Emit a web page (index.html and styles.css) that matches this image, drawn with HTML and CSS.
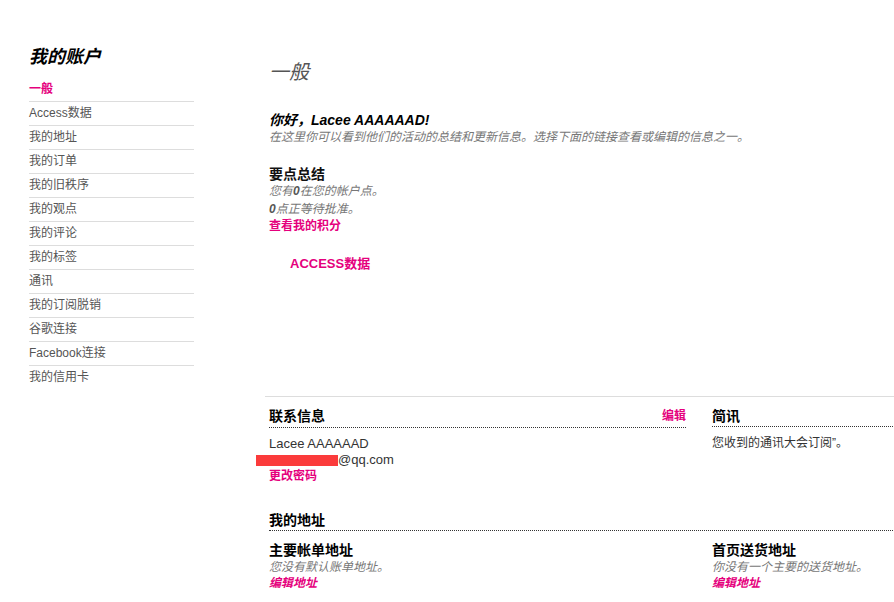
FILE: index.html
```html
<!DOCTYPE html>
<html lang="zh">
<head>
<meta charset="utf-8">
<title>我的账户</title>
<link rel="stylesheet" href="styles.css">
</head>
<body>
<div class="page">
  <aside class="sidebar">
    <h2 class="side-title">我的账户</h2>
    <ul class="side-nav">
      <li class="active">一般</li>
      <li>Access数据</li>
      <li>我的地址</li>
      <li>我的订单</li>
      <li>我的旧秩序</li>
      <li>我的观点</li>
      <li>我的评论</li>
      <li>我的标签</li>
      <li>通讯</li>
      <li>我的订阅脱销</li>
      <li>谷歌连接</li>
      <li>Facebook连接</li>
      <li>我的信用卡</li>
    </ul>
  </aside>
  <main class="main">
    <h1 class="page-title">一般</h1>
    <p class="greeting">你好，Lacee AAAAAAD!</p>
    <p class="intro">在这里你可以看到他们的活动的总结和更新信息。选择下面的链接查看或编辑的信息之一。</p>

    <section class="summary">
      <h3 class="summary-title">要点总结</h3>
      <p class="note">您有<b>0</b>在您的帐户点。</p>
      <p class="note"><b>0</b>点正等待批准。</p>
      <a class="link">查看我的积分</a>
    </section>

    <div class="access">ACCESS数据</div>

    <div class="divider"></div>

    <div class="cols contact">
      <section class="col">
        <div class="box-head"><span>联系信息</span><a class="edit">编辑</a></div>
        <p class="plain">Lacee AAAAAAD</p>
        <p class="plain"><span class="redact"></span>@qq.com</p>
        <a class="link small">更改密码</a>
      </section>
      <section class="col">
        <div class="box-head"><span>简讯</span></div>
        <p class="plain news">您收到的通讯大会订阅”。</p>
      </section>
    </div>

    <div class="box-head full"><span>我的地址</span></div>
    <div class="cols addr">
      <section class="col">
        <h4 class="addr-title">主要帐单地址</h4>
        <p class="note">您没有默认账单地址。</p>
        <a class="link italic">编辑地址</a>
      </section>
      <section class="col">
        <h4 class="addr-title">首页送货地址</h4>
        <p class="note">你没有一个主要的送货地址。</p>
        <a class="link italic">编辑地址</a>
      </section>
    </div>
  </main>
</div>
</body>
</html>
```

FILE: styles.css
```css
html, body {
  margin: 0;
  padding: 0;
  background: #fff;
  overflow: hidden;
}
body {
  font-family: "Liberation Sans", "Noto Sans CJK SC", sans-serif;
  color: #333;
  width: 894px;
  height: 602px;
}
p, h1, h2, h3, h4, ul { margin: 0; padding: 0; }
.page {
  display: flex;
  align-items: flex-start;
  width: 1200px;
}
.sidebar {
  margin-left: 29px;
  width: 165px;
  padding-top: 45px;
  flex: none;
}
.side-title {
  font-size: 18px;
  line-height: 24px;
  font-weight: bold;
  font-style: italic;
  color: #000;
  margin-bottom: 9px;
}
.side-nav {
  list-style: none;
}
.side-nav li {
  font-size: 12px;
  line-height: 23px;
  color: #555;
  border-bottom: 1px solid #ddd;
}
.side-nav li:last-child { border-bottom: none; }
.side-nav li.active {
  color: #e5007d;
  font-weight: bold;
}
.main {
  margin-left: 75px;
  width: 860px;
  padding-top: 60px;
  flex: none;
}
.page-title {
  font-size: 20px;
  line-height: 24px;
  font-weight: normal;
  font-style: italic;
  color: #555;
}
.greeting {
  margin-top: 27px;
  font-size: 14px;
  line-height: 18px;
  font-weight: bold;
  font-style: italic;
  color: #000;
}
.intro {
  font-size: 12px;
  line-height: 16px;
  font-style: italic;
  color: #777;
}
.summary { margin-top: 20px; display: flex; flex-direction: column; align-items: flex-start; }
.summary-title {
  font-size: 14px;
  line-height: 18px;
  font-weight: bold;
  color: #111;
}
.note {
  font-size: 12px;
  line-height: 17.5px;
  font-style: italic;
  color: #777;
}
.note b { color: #555; }
.link {
  font-size: 12px;
  line-height: 17.5px;
  font-weight: bold;
  color: #e5007d;
}
.link.small { line-height: 16px; }
.link.italic { font-style: italic; line-height: 16px; }
.access {
  margin-top: 19px;
  padding-left: 21px;
  font-size: 13px;
  line-height: 18px;
  font-weight: bold;
  color: #e5007d;
}
.divider {
  margin-top: 123px;
  margin-left: -4px;
  height: 1px;
  background: #ddd;
}
.cols {
  display: flex;
  gap: 26px;
}
.col {
  width: 417px;
  display: flex;
  flex-direction: column;
  align-items: flex-start;
}
.cols.contact { margin-top: 10px; }
.box-head {
  align-self: stretch;
  display: flex;
  justify-content: space-between;
  align-items: baseline;
  font-size: 14px;
  line-height: 18px;
  font-weight: bold;
  color: #000;
  padding-bottom: 1px;
  border-bottom: 1px dotted #333;
  margin-bottom: 8px;
}
.box-head .edit {
  font-size: 12px;
  color: #e5007d;
  position: relative;
  top: -1px;
}
.box-head.full {
  margin-top: 27px;
  margin-bottom: 10px;
}
.plain {
  font-size: 13px;
  line-height: 16px;
  color: #333;
}
.plain.news { font-size: 12px; }
.redact {
  display: inline-block;
  width: 82px;
  height: 11px;
  margin-left: -13px;
  vertical-align: -2px;
  background: #fb3b3b;
}
.addr-title {
  font-size: 14px;
  line-height: 18px;
  font-weight: bold;
  color: #000;
}
.addr .note { line-height: 16px; }
```
